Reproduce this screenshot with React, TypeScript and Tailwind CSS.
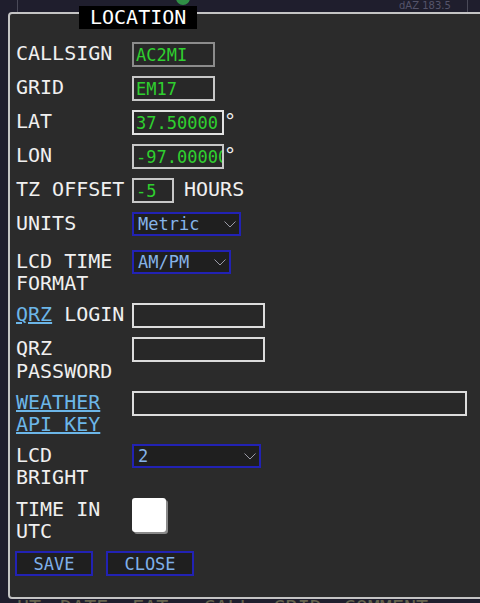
import React from "react";

function Chevron() {
  return (
    <svg width="12" height="7" viewBox="0 0 12 7" className="shrink-0">
      <path d="M0.5 0.5 L6 6 L11.5 0.5" fill="none" stroke="#9a9aa6" strokeWidth="1" />
    </svg>
  );
}

function Select({ value, w }: { value: string; w: string }) {
  return (
    <div
      className={`${w} box-border h-[24px] flex items-center justify-between border-2 border-[#2222b4] bg-[#1f1f1f] pl-[4px] pr-[3px] text-[17px] leading-[20px] text-[#86b3e8]`}
    >
      <span>{value}</span>
      <Chevron />
    </div>
  );
}

function Input({ value, w, border }: { value: string; w: string; border?: string }) {
  return (
    <input
      readOnly
      value={value}
      className={`${w} box-border h-[25px] border-2 ${border ?? "border-[#c8c8c8]"} bg-[#282828] pl-[2px] pr-0 text-[17px] leading-[21px] text-[#2fcf2f] outline-none font-['DejaVu_Sans_Mono',monospace]`}
    />
  );
}

export default function App() {
  return (
    <div className="relative w-[480px] h-[603px] overflow-hidden bg-[#1f1e2d] font-['DejaVu_Sans_Mono',monospace]">
      {/* background app (mostly hidden) */}
      <div className="flex flex-col h-full">
        <div className="h-[12px] flex items-start">
          <div className="ml-[17px] w-[1px] h-[12px] bg-[#4a4a58]" />
          <div className="ml-[158px] -mt-[9px] w-[14px] h-[14px] rounded-full bg-[#2f8f45]" />
          <div className="ml-[209px] mt-[1px] text-[10px] leading-[10px] text-[#55546a] font-['DejaVu_Sans',sans-serif]">
            dAZ 183.5
          </div>
          <div className="ml-[16px] w-[1px] h-[12px] bg-[#4a4a58]" />
        </div>
        <div className="flex-1" />
        <div className="h-[8px] overflow-hidden flex text-[20px] leading-[24px] text-[#66654f]">
          <span className="ml-[17px]">UT</span>
          <span className="ml-[19px]">DATE</span>
          <span className="ml-[24px]">EAT</span>
          <span className="ml-[35px]">CALL</span>
          <span className="ml-[22px]">GRID</span>
          <span className="ml-[22px]">COMMENT</span>
        </div>
      </div>

      {/* modal panel */}
      <div className="absolute left-[8px] top-[12px] w-[500px] h-[587px] box-border border-2 border-[#c4c4c4] rounded-[4px] bg-[#2b2b2b] pl-[6px] pt-[28px] text-[20px] leading-[22.2px] text-[#f0f0f0]">
        <div className="absolute -top-[8px] left-[69px] h-[23px] px-[11px] bg-black text-white text-[20px] leading-[23px]">
          LOCATION
        </div>

        <div className="flex flex-col gap-[9px]">
          <div className="flex items-start">
            <div className="w-[116px]">CALLSIGN</div>
            <Input value="AC2MI" w="w-[83px]" border="border-[#8c8c8c]" />
          </div>
          <div className="flex items-start">
            <div className="w-[116px]">GRID</div>
            <Input value="EM17" w="w-[83px]" />
          </div>
          <div className="flex items-start">
            <div className="w-[116px]">LAT</div>
            <Input value="37.50000" w="w-[92px]" border="border-[#e2e2e2]" />
            <span>°</span>
          </div>
          <div className="flex items-start">
            <div className="w-[116px]">LON</div>
            <Input value="-97.00000" w="w-[92px]" />
            <span>°</span>
          </div>
          <div className="flex items-start">
            <div className="w-[116px]">TZ OFFSET</div>
            <Input value="-5" w="w-[42px]" />
            <span className="ml-[10px]">HOURS</span>
          </div>
          <div className="flex items-start mb-[5px]">
            <div className="w-[116px]">UNITS</div>
            <Select value="Metric" w="w-[109px]" />
          </div>
          <div className="flex items-start">
            <div className="w-[116px]">
              LCD TIME
              <br />
              FORMAT
            </div>
            <Select value="AM/PM" w="w-[99px]" />
          </div>
          <div className="flex items-start">
            <div className="w-[116px]">
              <span className="text-[#6cb6e8] underline">QRZ</span> LOGIN
            </div>
            <Input value="" w="w-[133px]" border="border-[#dcdcdc]" />
          </div>
          <div className="flex items-start">
            <div className="w-[116px]">
              QRZ
              <br />
              PASSWORD
            </div>
            <Input value="" w="w-[133px]" border="border-[#dcdcdc]" />
          </div>
          <div className="flex items-start">
            <div className="w-[116px]">
              <span className="text-[#6cb6e8] underline">
                WEATHER
                <br />
                API KEY
              </span>
            </div>
            <Input value="" w="w-[335px]" border="border-[#dcdcdc]" />
          </div>
          <div className="flex items-start">
            <div className="w-[116px]">
              LCD
              <br />
              BRIGHT
            </div>
            <Select value="2" w="w-[129px]" />
          </div>
          <div className="flex items-start">
            <div className="w-[116px]">
              TIME IN
              <br />
              UTC
            </div>
            <div className="w-[34px] h-[34px] rounded-[3px] bg-white shadow-[2px_2px_0_#8a8a8a]" />
          </div>
          <div className="flex items-start gap-[13px] -ml-[1px]">
            <div className="box-border h-[25px] w-[78px] flex items-center justify-center border-2 border-[#2222b4] bg-[#1f1f1f] text-[17px] leading-[20px] text-[#7fb0ea]">
              SAVE
            </div>
            <div className="box-border h-[25px] w-[88px] flex items-center justify-center border-2 border-[#2222b4] bg-[#1f1f1f] text-[17px] leading-[20px] text-[#7fb0ea]">
              CLOSE
            </div>
          </div>
        </div>
      </div>
    </div>
  );
}
